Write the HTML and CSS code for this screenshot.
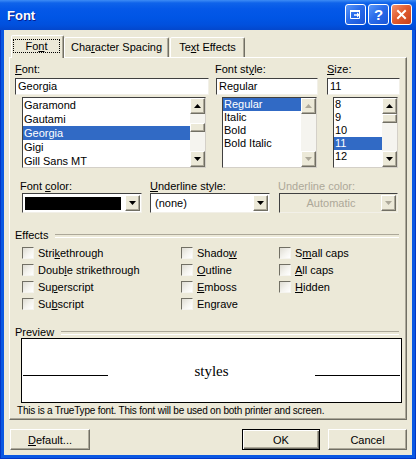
FILE: index.html
```html
<!DOCTYPE html>
<html>
<head>
<meta charset="utf-8">
<title>Font</title>
<link rel="stylesheet" href="styles.css">
</head>
<body>
<div class="window">
  <div class="titlebar">
    <span class="title">Font</span>
    <div class="tbtns">
      <span class="tbtn"><svg width="13" height="13" viewBox="0 0 13 13"><path d="M1.5 2.5h9v8h-9z" fill="none" stroke="#fff"/><path d="M1 2h10v2H1z" fill="#fff"/><path d="M5 7h4" stroke="#fff" stroke-width="1.5"/><path d="M8 4.5l3 2.5-3 2.5z" fill="#fff"/></svg></span>
      <span class="tbtn help">?</span>
      <span class="tbtn close"><svg width="13" height="13" viewBox="0 0 13 13"><path d="M3 3l7 7M10 3l-7 7" stroke="#fff" stroke-width="2" stroke-linecap="square"/></svg></span>
    </div>
  </div>
  <div class="client">
    <div class="tabs">
      <div class="tab active"><span class="focus">Fo<u>n</u>t</span></div>
      <div class="tab t-cs">Cha<u>r</u>acter Spacing</div>
      <div class="tab t-te">Te<u>x</u>t Effects</div>
    </div>
    <div class="panel">
      <div class="toprow">
        <div class="col col1">
          <div class="lbl"><u>F</u>ont:</div>
          <div class="tbox">Georgia</div>
          <div class="list l-font">
            <div class="items">
              <div class="item">Garamond</div>
              <div class="item">Gautami</div>
              <div class="item sel">Georgia</div>
              <div class="item">Gigi</div>
              <div class="item">Gill Sans MT</div>
            </div>
            <div class="sbar">
              <div class="sbtn"><svg class="arr" width="7" height="4" viewBox="0 0 7 4"><path d="M3.5 0L7 4H0z"/></svg></div>
              <div class="track"><div class="thumb t-font"></div></div>
              <div class="sbtn"><svg class="arr" width="7" height="4" viewBox="0 0 7 4"><path d="M0 0h7L3.5 4z"/></svg></div>
            </div>
          </div>
        </div>
        <div class="col col2">
          <div class="lbl">Font st<u>y</u>le:</div>
          <div class="tbox">Regular</div>
          <div class="list l-style s13">
            <div class="items">
              <div class="item sel">Regular</div>
              <div class="item">Italic</div>
              <div class="item">Bold</div>
              <div class="item">Bold Italic</div>
            </div>
            <div class="sbar">
              <div class="sbtn"><svg class="arr dis" width="7" height="4" viewBox="0 0 7 4"><path d="M3.5 0L7 4H0z"/></svg></div>
              <div class="track"></div>
              <div class="sbtn"><svg class="arr dis" width="7" height="4" viewBox="0 0 7 4"><path d="M0 0h7L3.5 4z"/></svg></div>
            </div>
          </div>
        </div>
        <div class="col col3">
          <div class="lbl"><u>S</u>ize:</div>
          <div class="tbox">11</div>
          <div class="list l-size s13">
            <div class="items">
              <div class="item">8</div>
              <div class="item">9</div>
              <div class="item">10</div>
              <div class="item sel">11</div>
              <div class="item">12</div>
            </div>
            <div class="sbar">
              <div class="sbtn"><svg class="arr" width="7" height="4" viewBox="0 0 7 4"><path d="M3.5 0L7 4H0z"/></svg></div>
              <div class="track"><div class="thumb"></div></div>
              <div class="sbtn"><svg class="arr" width="7" height="4" viewBox="0 0 7 4"><path d="M0 0h7L3.5 4z"/></svg></div>
            </div>
          </div>
        </div>
      </div>

      <div class="droprow">
        <div class="dcol d1">
          <div class="lbl">Font <u>c</u>olor:</div>
          <div class="drop"><span class="swatch"></span><span class="dbtn"><svg class="arr" width="7" height="4" viewBox="0 0 7 4"><path d="M0 0h7L3.5 4z"/></svg></span></div>
        </div>
        <div class="dcol d2">
          <div class="lbl"><u>U</u>nderline style:</div>
          <div class="drop"><span class="val">(none)</span><span class="dbtn"><svg class="arr" width="7" height="4" viewBox="0 0 7 4"><path d="M0 0h7L3.5 4z"/></svg></span></div>
        </div>
        <div class="dcol d3">
          <div class="lbl dis-text">Underline color:</div>
          <div class="drop disabled"><span class="val">Automatic</span><span class="dbtn"><svg class="arr dis" width="7" height="4" viewBox="0 0 7 4"><path d="M0 0h7L3.5 4z"/></svg></span></div>
        </div>
      </div>

      <div class="group-h g-eff">Effects</div>
      <div class="checks">
        <div class="chk"><span class="box"></span>Stri<u>k</u>ethrough</div>
        <div class="chk"><span class="box"></span>Doub<u>l</u>e strikethrough</div>
        <div class="chk"><span class="box"></span>Su<u>p</u>erscript</div>
        <div class="chk"><span class="box"></span>Su<u>b</u>script</div>
        <div class="chk"><span class="box"></span>Shado<u>w</u></div>
        <div class="chk"><span class="box"></span><u>O</u>utline</div>
        <div class="chk"><span class="box"></span><u>E</u>mboss</div>
        <div class="chk"><span class="box"></span>En<u>g</u>rave</div>
        <div class="chk"><span class="box"></span>S<u>m</u>all caps</div>
        <div class="chk"><span class="box"></span><u>A</u>ll caps</div>
        <div class="chk"><span class="box"></span><u>H</u>idden</div>
      </div>

      <div class="group-h g-pv">Preview</div>
      <div class="preview">
        <span class="pline"></span>
        <span class="ptext">styles</span>
        <span class="pline"></span>
      </div>
      <div class="note">This is a TrueType font. This font will be used on both printer and screen.</div>
    </div>
    <div class="btnrow">
      <div class="btn b-def"><span><u>D</u>efault...</span></div>
      <div class="btn b-ok">OK</div>
      <div class="btn b-cancel">Cancel</div>
    </div>
  </div>
</div>
</body>
</html>
```

FILE: styles.css
```css
* { box-sizing: border-box; }
html, body { margin: 0; padding: 0; }
body {
  width: 416px;
  height: 459px;
  overflow: hidden;
  font-family: "Liberation Sans", Arial, sans-serif;
  font-size: 11px;
  color: #000;
  background: #ECE9D8;
}
u { text-decoration: underline; text-underline-offset: 1px; }

.window {
  width: 416px;
  height: 459px;
  display: flex;
  flex-direction: column;
  background: #0A58E2;
  box-shadow: inset 1px 0 #0336C6, inset -1px 0 #0336C6, inset 0 -1px #0336C6;
}

/* title bar */
.titlebar {
  height: 30px;
  flex: none;
  display: flex;
  align-items: center;
  padding: 0 4px 0 7px;
  background: linear-gradient(to bottom, #3D8CF5 0px, #0F63EA 3px, #0458E8 9px, #0055E5 18px, #0150DD 25px, #0347CC 30px);
}
.title {
  flex: 1;
  color: #fff;
  font-weight: bold;
  font-size: 13px;
  text-shadow: 1px 1px #0A1C8A;
  margin-top: 1px;
}
.tbtns { display: flex; gap: 2px; margin-top: -1px; }
.tbtn {
  width: 21px;
  height: 21px;
  border: 1px solid #fff;
  border-radius: 3px;
  background: linear-gradient(135deg, #5A98FA 0%, #2A6CEA 45%, #1A55D8 100%);
  display: flex;
  align-items: center;
  justify-content: center;
  color: #fff;
  font-weight: bold;
  font-size: 15px;
  line-height: 1;
}
.tbtn.close { background: linear-gradient(135deg, #F2926F 0%, #E15D31 45%, #C9401B 100%); }

/* client */
.client {
  flex: 1;
  margin: 0 4px 4px;
  padding-top: 5px;
  background: #ECE9D8;
  display: flex;
  flex-direction: column;
}

.tabs {
  display: flex;
  align-items: flex-end;
  height: 22px;
  padding-left: 7px;
  position: relative;
  z-index: 1;
}
.tab {
  height: 20px;
  border: 1px solid;
  border-bottom: none;
  border-color: #fff #716F64 transparent #fff;
  box-shadow: inset -1px 0 #ACA899;
  border-radius: 2px 2px 0 0;
  background: #ECE9D8;
  text-align: center;
  line-height: 18px;
  white-space: nowrap;
}
.tab.active {
  width: 53px;
  height: 23px;
  margin-bottom: -1px;
}
.focus {
  display: block;
  width: 47px;
  height: 14px;
  margin: 3px 0 0 1px;
  border: 1px dotted #000;
  line-height: 12px;
  text-align: center;
}
.t-cs { width: 105px; }
.t-te { width: 75px; margin-left: 1px; }

.panel {
  margin-left: 5px;
  width: 398px;
  height: 363px;
  flex: none;
  border: 1px solid;
  border-color: #fff #716F64 #716F64 #fff;
  box-shadow: inset -1px -1px #ACA899;
  padding: 5px 5px 0;
}

.toprow { display: flex; }
.col1 { width: 194px; }
.col2 { width: 103px; margin-left: 6px; }
.col3 { width: 73px; margin-left: 9px; }
.lbl {
  height: 13px;
  line-height: 13px;
  margin-bottom: 2px;
  white-space: nowrap;
}
.tbox {
  height: 17px;
  background: #fff;
  border: 1px solid;
  border-color: #404040 #F2F0E8 #F2F0E8 #404040;
  padding-left: 2px;
  line-height: 15px;
}
.col2 .tbox { margin-left: 1px; }

.list {
  margin-top: 2px;
  height: 71px;
  background: #fff;
  border: 1px solid;
  border-color: #404040 #D4D0C8 #D4D0C8 #404040;
  display: flex;
}
.l-font { margin-left: 7px; width: 184px; }
.l-style { margin-left: 7px; width: 95px; }
.l-size { margin-left: 6px; width: 65px; }
.items { flex: 1; overflow: hidden; }
.item {
  height: 14px;
  line-height: 14px;
  padding-left: 1px;
  white-space: nowrap;
}
.s13 .item { height: 13px; line-height: 13px; }
.item.sel { background: #316AC5; color: #fff; }

.sbar {
  width: 15px;
  display: flex;
  flex-direction: column;
  background: #F5F4EF;
}
.sbtn, .thumb, .dbtn, .btn {
  background: #ECE9D8;
  border: 1px solid;
  border-color: #fff #716F64 #716F64 #fff;
  box-shadow: inset -1px -1px #ACA899;
}
.sbtn {
  height: 16px;
  display: flex;
  align-items: center;
  justify-content: center;
}
.track { flex: 1; }
.thumb { height: 9px; }
.thumb.t-font { margin-top: 9px; }
.arr { fill: #000; display: block; }
.arr.dis { fill: #ACA899; }

/* dropdown row */
.droprow { display: flex; margin-top: 12px; padding-left: 7px; }
.d1 { width: 120px; }
.d2 { width: 120px; margin-left: 8px; }
.d3 { width: 119px; margin-left: 9px; }
.dcol .lbl { margin-bottom: 0; margin-left: -2px; }
.d2 .lbl { margin-left: 0; }
.d3 .lbl { margin-left: -1px; }
.dis-text { color: #ACA899; }
.drop {
  height: 20px;
  background: #fff;
  border: 1px solid;
  border-color: #404040 #F2F0E8 #F2F0E8 #404040;
  padding: 1px;
  display: flex;
}
.swatch { flex: 1; margin: 2px 4px 1px 1px; background: #000; }
.val { flex: 1; line-height: 16px; padding-left: 3px; white-space: nowrap; }
.dbtn {
  width: 15px;
  display: flex;
  align-items: center;
  justify-content: center;
}
.drop.disabled { background: #ECE9D8; }
.drop.disabled .val { color: #ACA899; text-align: center; padding-left: 0; }

/* groups */
.group-h {
  display: flex;
  align-items: center;
  height: 13px;
  line-height: 13px;
  white-space: nowrap;
}
.group-h::after {
  content: "";
  flex: 1;
  height: 2px;
  border-top: 1px solid #ACA899;
  border-bottom: 1px solid #fff;
  margin: 1px 2px 0 7px;
}
.g-eff { margin-top: 16px; }
.g-pv { margin-top: 14px; height: 12px; }

.checks {
  display: grid;
  grid-template-columns: 159px 98px 1fr;
  grid-template-rows: repeat(4, 17px);
  grid-auto-flow: column;
  padding-left: 7px;
  margin-top: 2px;
}
.chk { display: flex; align-items: center; white-space: nowrap; }
.box {
  width: 12px;
  height: 12px;
  margin-right: 4px;
  border: 1px solid;
  border-color: #716F64 #F5F4EF #F5F4EF #716F64;
  background: linear-gradient(135deg, #DEDCD3 0%, #F4F3EE 55%, #fff 100%);
  flex: none;
}

.preview {
  margin-left: 6px;
  width: 381px;
  height: 65px;
  border: 1px solid #000;
  background: #fff;
  display: flex;
  align-items: baseline;
  justify-content: space-between;
  padding: 24px 1px 0;
}
.pline { width: 85px; height: 1px; background: #000; }
.ptext {
  font-family: "Liberation Serif", "Times New Roman", serif;
  font-size: 15px;
  line-height: 17px;
}
.note {
  margin-top: 1px;
  padding-left: 2px;
  font-size: 10px;
  letter-spacing: -0.2px;
  line-height: 13px;
  white-space: nowrap;
}

/* buttons */
.btnrow { display: flex; margin-top: 9px; padding: 0 5px 0 6px; }
.btn {
  height: 21px;
  display: flex;
  align-items: center;
  justify-content: center;
}
.b-def { width: 80px; }
.b-ok {
  width: 78px;
  margin-left: auto;
  border-color: #000;
  box-shadow: inset 1px 1px #fff, inset -1px -1px #716F64, inset -2px -2px #ACA899;
}
.b-cancel { width: 79px; margin-left: 8px; }
```
